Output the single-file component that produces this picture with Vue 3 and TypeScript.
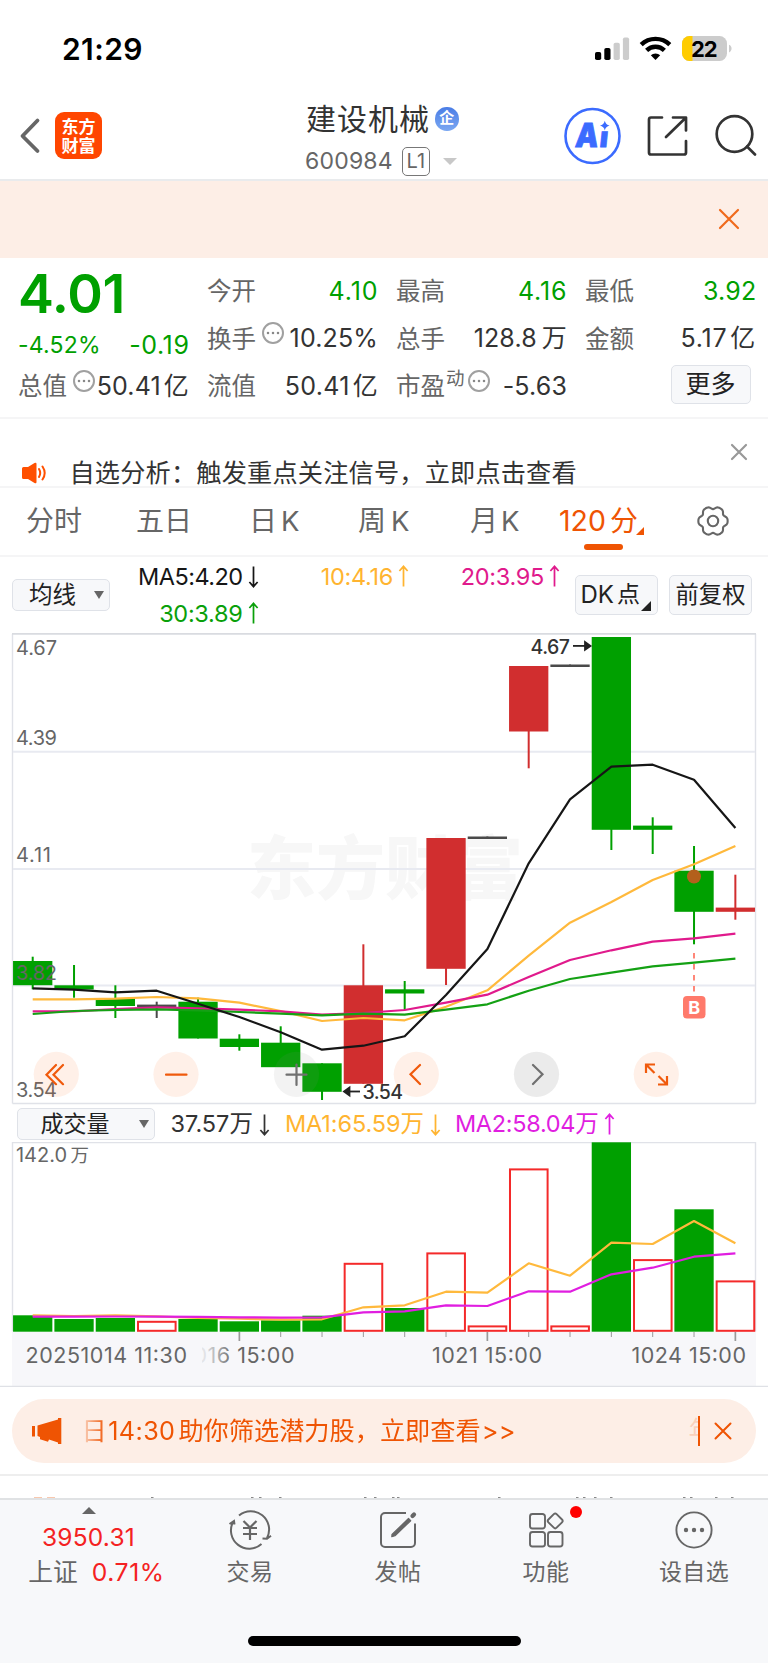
<script setup lang="ts">
type Tone = 'up' | 'down' | 'flat'
interface Candle { top: number; bottom: number; high: number; low: number; tone: Tone }

const STEP = 41.333
const FIRST = 32.7
const BODY = 39.3
const cx = (i: number): number => FIRST + i * STEP

const c = (high: number, top: number, bottom: number, low: number, tone: Tone): Candle => ({ high, top, bottom, low, tone })
const candles: Candle[] = [
  c(956.7, 961, 985.2, 989.3, 'down'),
  c(965, 985.3, 989.5, 997.7, 'down'),
  c(985.3, 998.3, 1006, 1018, 'down'),
  c(1001.7, 1004.6, 1007, 1018, 'flat'),
  c(997.7, 1001.7, 1038.5, 1038.5, 'down'),
  c(1034.3, 1038.7, 1047, 1050.7, 'down'),
  c(1026.3, 1042.7, 1067.2, 1067, 'down'),
  c(1063.3, 1063.3, 1091.8, 1100, 'down'),
  c(944.3, 985.3, 1083.8, 1083.8, 'up'),
  c(981, 989.3, 993.5, 1010, 'down'),
  c(838, 838, 968.8, 985, 'up'),
  c(836.5, 836.5, 839, 839, 'flat'),
  c(666, 666, 731.5, 768.3, 'up'),
  c(664.5, 664.5, 667, 667, 'flat'),
  c(637, 637, 829.8, 850, 'down'),
  c(817.3, 825.6, 829.8, 854, 'down'),
  c(846, 870.7, 911.8, 944.3, 'down'),
  c(874.7, 907.6, 911.8, 919.7, 'up'),
]

interface Line { color: string; ys: number[] }
const averages: Line[] = [
  { color: '#ffb93c', ys: [999.3, 999.3, 998.7, 997, 998.3, 1002.7, 1011, 1021, 1018, 1020.3, 1006.7, 990.3, 955.7, 922.7, 902, 880, 864.3, 846] },
  { color: '#e01a8c', ys: [1011.3, 1011.3, 1009, 1007.3, 1008.3, 1009.7, 1011.3, 1014.7, 1013, 1010, 1002.7, 994.7, 977, 960, 950.3, 941.7, 938.3, 933.7] },
  { color: '#14a114', ys: [1014, 1011, 1010, 1009.3, 1010.3, 1012, 1013.7, 1015.3, 1013.7, 1014.7, 1009.7, 1004.3, 990.7, 979, 972.7, 966.3, 962.7, 958.7] },
  { color: '#161616', ys: [988.3, 989.7, 992.3, 990.7, 1003.7, 1017, 1032.3, 1049.7, 1045.7, 1036.3, 995, 949, 863.3, 799.3, 766.7, 764.7, 779.7, 828] },
]
const volumeLines: Line[] = [
  { color: '#ffb93c', ys: [1315.4, 1316, 1315.3, 1316.3, 1318, 1318.7, 1319.7, 1319.3, 1307.3, 1305.3, 1291.7, 1292.7, 1263.3, 1275.7, 1242.7, 1244, 1221, 1243.3] },
  { color: '#e01ee0', ys: [1316.7, 1316.7, 1316.5, 1316.7, 1316.8, 1317.3, 1317.6, 1317.3, 1312.3, 1311.3, 1305.3, 1306, 1291.3, 1291.7, 1274.3, 1267.7, 1256.7, 1253.3] },
]
const points = (ys: number[]): string => ys.map((y, i) => `${cx(i).toFixed(1)},${y}`).join(' ')

const volumes: { top: number; up: boolean }[] = [
  { top: 1315.3, up: false }, { top: 1319, up: false }, { top: 1318, up: false }, { top: 1321, up: true },
  { top: 1319, up: false }, { top: 1321.3, up: false }, { top: 1320.3, up: false }, { top: 1315.7, up: false },
  { top: 1263, up: true }, { top: 1308, up: false }, { top: 1252.6, up: true }, { top: 1325.6, up: true },
  { top: 1168.6, up: true }, { top: 1325.6, up: true }, { top: 1142.3, up: false }, { top: 1259.3, up: true },
  { top: 1209.3, up: false }, { top: 1280.6, up: true },
]
const ticks = Array.from({ length: 13 }, (_, i) => i + 5)
const gridLines = [751.7, 869, 985.4]
const priceLabels = [
  { y: 655, text: '4.67' }, { y: 745, text: '4.39' }, { y: 862.2, text: '4.11' }, { y: 979.5, text: '3.82' }, { y: 1097, text: '3.54' },
]
const fill = (t: Tone): string => (t === 'up' ? '#d12e2f' : t === 'down' ? '#00a000' : '#4a4a4a')

// Six-lobed outline of the settings gear
const gear = Array.from({ length: 72 }, (_, i) => {
  const a = (i * Math.PI) / 36
  const r = 13.6 + 1.4 * Math.cos(6 * a) - 0.35 * Math.cos(12 * a)
  return `${(r * Math.cos(a)).toFixed(2)},${(r * Math.sin(a)).toFixed(2)}`
}).join(' ')

const tabs = [
  { cjk: '分时', latin: '', cls: 't1' }, { cjk: '五日', latin: '', cls: 't2' }, { cjk: '日', latin: 'K', cls: 't3' },
  { cjk: '周', latin: 'K', cls: 't4' }, { cjk: '月', latin: 'K', cls: 't5' },
]
const cutMarks = [34, 47, 151, 251, 259, 279, 364, 374, 392, 397, 498, 576, 583, 594, 610, 683, 690, 715, 731]
</script>

<template>
  <div class="phone">
    <div class="status">
      <span class="clock">21:29</span>
      <svg class="signals" width="140" height="30" viewBox="594 33 140 30">
        <rect x="595" y="52" width="6.2" height="8" rx="1.8" />
        <rect x="604.3" y="48" width="6.2" height="12" rx="1.8" />
        <rect x="613.6" y="42.7" width="6.2" height="17.3" rx="1.8" fill="#ccc" />
        <rect x="622.9" y="37.4" width="6.2" height="22.6" rx="1.8" fill="#ccc" />
        <g fill="none" stroke="#000" stroke-width="4.4">
          <path d="M641.2 44.6a20.6 20.6 0 0 1 28.6 0" />
          <path d="M646.6 50.3a12.8 12.8 0 0 1 17.8 0" />
        </g>
        <path d="M655.5 60l-4.7-4.7a6.8 6.8 0 0 1 9.4 0z" />
        <clipPath id="cell"><rect x="682" y="36" width="45" height="25" rx="7.5" /></clipPath>
        <g clip-path="url(#cell)"><rect x="682" y="36" width="45" height="25" fill="#ccc" /><rect x="682" y="36" width="10.5" height="25" fill="#fc0" /></g>
        <path d="M729 44.800c3.400 1.200 3.400 6.400 0 7.600z" fill="#ccc" />
        <text x="691" y="56.600" textLength="26.500" class="bat">22</text>
      </svg>
    </div>

    <header class="head">
      <svg class="back" width="22" height="38" viewBox="0 0 22 38"><path d="M18.500 3.500L3.500 19l15 15" fill="none" stroke="#666" stroke-width="3.800" stroke-linecap="round" stroke-linejoin="round" /></svg>
      <div class="logo">东方<br />财富</div>
      <div class="title">
        <div class="name">建设机械<i class="corp">企</i></div>
        <div class="code"><span>600984</span><b>L1</b><i class="caret"></i></div>
      </div>
      <svg class="actions" width="200" height="64" viewBox="560 104 200 64" fill="none">
        <circle cx="592.500" cy="136" r="27" stroke="#3b6bff" stroke-width="2.600" />
        <g class="ai" transform="translate(574.5 146.800) skewX(-6)">
          <text x="0" y="0" textLength="23" lengthAdjust="spacingAndGlyphs" class="cap">A</text>
          <text x="24.500" y="0" class="dotless">ı</text>
        </g>
        <path d="M604.800 120.800q.9 3.900 4.800 4.800-3.900.9-4.800 4.800-.9-3.900-4.800-4.800 3.900-.9 4.800-4.800z" fill="#3b6bff" />
        <g stroke="#333" stroke-width="2.700" stroke-linecap="round" stroke-linejoin="round">
          <path d="M662 117.500h-11a2 2 0 0 0-2 2v33a2 2 0 0 0 2 2h33a2 2 0 0 0 2-2v-11.500M673 117.500h13v13M685.500 118l-19.500 19" />
          <circle cx="734.500" cy="134" r="17.800" /><path d="M747 146.500l8 8" />
        </g>
      </svg>
    </header>

    <div class="banner"><svg width="22" height="22" viewBox="0 0 22 22"><path d="M2 2l18 18M20 2L2 20" stroke="#f06a1c" stroke-width="2.200" stroke-linecap="round" /></svg></div>

    <section class="quote">
      <div class="col first">
        <div class="price">4.01</div>
        <div class="delta"><span class="pct">-4.52%</span><span class="num chg">-0.19</span></div>
        <div class="cell"><label>总值</label><i class="dots"></i><span class="num">50.41<em>亿</em></span></div>
      </div>
      <div class="col">
        <div class="cell"><label>今开</label><span class="num g">4.10</span></div>
        <div class="cell"><label>换手</label><i class="dots"></i><span class="num">10.25%</span></div>
        <div class="cell"><label>流值</label><span class="num cap2">50.41<em>亿</em></span></div>
      </div>
      <div class="col">
        <div class="cell"><label>最高</label><span class="num g">4.16</span></div>
        <div class="cell"><label>总手</label><span class="num">128.8<em class="wan">万</em></span></div>
        <div class="cell"><label>市盈<sup>动</sup></label><i class="dots tight"></i><span class="num">-5.63</span></div>
      </div>
      <div class="col">
        <div class="cell"><label>最低</label><span class="num g low">3.92</span></div>
        <div class="cell"><label>金额</label><span class="num wide">5.17<em>亿</em></span></div>
        <div class="cell"><button class="btn more">更多</button></div>
      </div>
    </section>

    <section class="notice">
      <svg class="speaker" width="26" height="22" viewBox="0 0 26 22"><path d="M1 6.500q0-1.500 1.500-1.500H7l6.500-4q2-1 2 1v18q0 2-2 1L7 17H2.500Q1 17 1 15.500z" fill="#ff5000" /><path d="M18 7q2.400 4 0 8M21.500 4.500q4.400 6.500 0 13" fill="none" stroke="#ff5000" stroke-width="2" stroke-linecap="round" /></svg>
      <span>自选分析：触发重点关注信号，立即点击查看</span>
      <svg class="x" width="18" height="18" viewBox="0 0 18 18"><path d="M2 2l14 14M16 2L2 16" stroke="#999" stroke-width="2.200" stroke-linecap="round" /></svg>
    </section>

    <nav class="tabs">
      <span v-for="t in tabs" :key="t.cls" :class="t.cls">{{ t.cjk }}<b v-if="t.latin">{{ t.latin }}</b></span>
      <span class="on"><b>120</b>分<i class="corner"></i></span>
      <svg class="gear" width="34" height="34" viewBox="-17 -17 34 34" fill="none" stroke="#666" stroke-width="2.100" stroke-linejoin="round">
        <polygon :points="gear" /><circle r="5.200" />
      </svg>
    </nav>

    <section class="ma">
      <button class="btn sel">均线<i class="tri"></i></button>
      <div class="legend">
        <span class="k">MA5:4.20<svg class="arw dn" viewBox="0 0 12 24"><path d="M6 23V1M1.500 6L6 1l4.500 5" /></svg></span>
        <span class="y">10:4.16<svg class="arw" viewBox="0 0 12 24"><path d="M6 23V1M1.500 6L6 1l4.500 5" /></svg></span>
        <span class="m">20:3.95<svg class="arw" viewBox="0 0 12 24"><path d="M6 23V1M1.500 6L6 1l4.500 5" /></svg></span>
        <span class="gr">30:3.89<svg class="arw" viewBox="0 0 12 24"><path d="M6 23V1M1.500 6L6 1l4.500 5" /></svg></span>
      </div>
      <button class="btn dk">DK<em>点</em><i class="fold"></i></button>
      <button class="btn fq">前复权</button>
    </section>

    <svg class="chart" width="768" height="472" viewBox="0 633 768 472">
      <path d="M12.500 1103.500V634M755.500 634v469.500M12.500 1103.500h743" stroke="#e0e2e8" stroke-width="1.400" fill="none" />
      <path d="M12 633.900h744" stroke="#d9dbe0" stroke-width="1.800" />
      <text x="247" y="893.500" class="water" textLength="276">东方财富</text>
      <path v-for="y in gridLines" :key="y" :d="`M13 ${y}h742`" stroke="#e8eaf1" stroke-width="2" />
      <g v-for="(k, i) in candles" :key="i" :fill="fill(k.tone)">
        <rect :x="cx(i) - 1" :y="k.high" width="2" :height="k.low - k.high" />
        <rect :x="cx(i) - BODY / 2" :y="k.top" :width="BODY" :height="k.bottom - k.top" />
      </g>
      <text v-for="p in priceLabels" :key="p.text" :x="16" :y="p.y" :textLength="p.text === '4.11' ? 35 : 41" class="axis">{{ p.text }}</text>
      <polyline v-for="l in averages" :key="l.color" :points="points(l.ys)" :stroke="l.color" class="line" />
      <circle cx="694" cy="876.500" r="7" fill="#b3601c" />
      <path d="M694 953v44" stroke="#ff7a6b" stroke-width="1.800" stroke-dasharray="5.500 5.500" />
      <rect x="683" y="996" width="22.500" height="22.500" rx="4" fill="#ff7a6b" />
      <text x="694.200" y="1014" class="bmark">B</text>
      <g class="mark"><text x="530.500" y="653.500" textLength="39.500">4.67</text><path d="M573 645.900h13" /><path d="M585 642l5.500 3.900-5.500 3.900z" fill="#222" stroke="none" />
        <text x="362.500" y="1099.300" textLength="40.500">3.54</text><path d="M348 1091.500h12" /><path d="M349.500 1087.600l-5.500 3.900 5.500 3.900z" fill="#222" stroke="none" /></g>
      <g fill="none" stroke-width="2.200" stroke-linecap="round">
        <circle v-for="x in [56.300, 176, 416.300, 656.300]" :key="x" :cx="x" cy="1074.300" r="22.600" fill="#ff6a20" fill-opacity=".1" />
        <circle cx="296.500" cy="1074.300" r="22.600" fill="#888" fill-opacity=".1" />
        <circle cx="536.500" cy="1074.300" r="22.600" fill="#888" fill-opacity=".17" />
        <g stroke="#f05a0c"><path d="M56 1065l-9.500 9.700 9.500 9.500M63 1065l-9.500 9.700 9.500 9.500M166 1074.700h20.500M420 1065l-9.500 9.300 9.500 9.700" /><path d="M646 1073v-8.500h9M646.500 1065l8 8M667 1076v8.500h-9M666.500 1084l-8-8" stroke-linecap="butt" /></g>
        <path d="M286.500 1074.700h20M296.500 1064.500v20.500M533 1065l9.500 9.300-9.500 9.700" stroke="#707070" />
      </g>
    </svg>

    <div class="volhead">
      <button class="btn vol">成交量<i class="tri"></i></button>
      <span class="v1">37.57万<svg class="arw dn" viewBox="0 0 12 24"><path d="M6 23V1M1.500 6L6 1l4.500 5" /></svg></span>
      <span class="v2 y">MA1:65.59万<svg class="arw dn" viewBox="0 0 12 24"><path d="M6 23V1M1.500 6L6 1l4.500 5" /></svg></span>
      <span class="v3">MA2:58.04万<svg class="arw" viewBox="0 0 12 24"><path d="M6 23V1M1.500 6L6 1l4.500 5" /></svg></span>
    </div>

    <svg class="chart" width="768" height="245" viewBox="0 1142 768 245">
      <defs><linearGradient id="fade"><stop offset="0" stop-color="#f7f7fa" /><stop offset=".35" stop-color="#f7f7fa" stop-opacity=".85" /><stop offset="1" stop-color="#f7f7fa" stop-opacity="0" /></linearGradient></defs>
      <path d="M12.500 1331.500v-189h743v189" stroke="#e0e2e8" stroke-width="1.400" fill="none" />
      <rect x="12" y="1331.500" width="744" height="55" fill="#f7f7fa" />
      <text x="16" y="1162.300" class="axis" textLength="51">142.0</text><text x="70.500" y="1162.300" class="axis cjk">万</text>
      <template v-for="(v, i) in volumes" :key="i">
        <rect v-if="v.up" :x="cx(i) - 18.700" :y="v.top + .8" width="37.600" :height="1330 - v.top" fill="#fff" stroke="#f42a2a" stroke-width="2" />
        <rect v-else :x="cx(i) - BODY / 2" :y="v.top" :width="BODY" :height="1331.700 - v.top" fill="#00a000" />
      </template>
      <polyline v-for="l in volumeLines" :key="l.color" :points="points(l.ys)" :stroke="l.color" class="line" />
      <path v-for="i in ticks" :key="i" :d="`M${cx(i)} 1332v${i % 6 === 5 ? 9 : 5}`" stroke="#999" :stroke-width="i % 6 === 5 ? 1.700 : 1" />
      <g class="date">
        <text x="25.500" y="1362.700" textLength="161.500">20251014 11:30</text>
        <text x="193.500" y="1362.700" textLength="101">016 15:00</text>
        <rect x="190" y="1344" width="44" height="24" fill="url(#fade)" />
        <rect x="189" y="1344" width="13" height="24" fill="#f7f7fa" />
        <text x="432" y="1362.700" textLength="110">1021 15:00</text>
        <text x="631.500" y="1362.700" textLength="114.500">1024 15:00</text>
      </g>
      <path d="M0 1386.300h768" stroke="#dfe1e6" stroke-width="1.300" />
    </svg>

    <div class="promo-wrap">
      <div class="promo">
        <svg width="32" height="28" viewBox="0 0 32 28" fill="#ef5403"><rect x="1" y="9" width="3" height="10.500" /><path d="M6.500 8.500L27 2.500V1h3.300v26H27v-1.500L18 22.500l-1 2.200-8-2.500V20L6.500 19z" /></svg>
        <span class="msg">日<b>14:30</b>助你筛选潜力股，立即查看<b class="gt">&gt;&gt;</b></span>
        <span class="next">年</span>
        <svg class="px" width="18" height="18" viewBox="0 0 18 18"><path d="M1.500 1.500l15 15M16.500 1.500l-15 15" stroke="#ef5403" stroke-width="2" stroke-linecap="round" /></svg>
      </div>
    </div>

    <div class="peek"><svg width="768" height="3" viewBox="0 0 768 3"><rect v-for="(m, i) in cutMarks" :key="m" :x="m" y="1" :width="i < 2 ? 8 : 2.500" height="2" :fill="i < 2 ? '#f8c8ae' : '#888'" /></svg></div>

    <footer class="dock">
      <div class="index"><i class="upc"></i><span class="pts">3950.31</span><span class="sh">上证<b>0.71%</b></span></div>
      <div class="item">
        <svg width="46" height="42" viewBox="-23 -21 46 42" fill="none" stroke="#666" stroke-width="2"><path d="M-11-14.500A18.300 18.300 0 0 1 17 8M12.500 8.500l4.500 .3 4-3M11.500 14A18.300 18.300 0 0 1-17-8M-20.500-6l4.500-3 .5 3.500" /><path d="M-6.500-9L0-2.500 6.500-9M0-2.500V10M-7-2h14M-7 4h14" stroke-width="2.200" /></svg>
        <span>交易</span>
      </div>
      <div class="item">
        <svg width="46" height="42" viewBox="-23 -21 46 42" fill="none" stroke="#666" stroke-width="2" stroke-linejoin="round"><path d="M8-17h-21a4 4 0 0 0-4 4v26a4 4 0 0 0 4 4h26a4 4 0 0 0 4-4V-6.500" /><path d="M-6 4.500L10.500-11.500l2.200 2.200L-3 5.700l-3.200 1z" fill="#666" stroke-width="1.200" /><path d="M14.500-14l1.500-1.500" stroke-width="4.200" stroke-linecap="round" /></svg>
        <span>发帖</span>
      </div>
      <div class="item">
        <svg width="46" height="42" viewBox="-23 -21 46 42" fill="none" stroke="#666" stroke-width="1.900"><rect x="-16" y="-16" width="15" height="14.500" rx="2.500" /><rect x="-16" y="2" width="15" height="14.500" rx="2.500" /><rect x="2" y="2" width="14.500" height="14.500" rx="2.500" /><rect x="3.400" y="-14.900" width="11.600" height="11.600" rx="2" transform="rotate(45 9.200 -9.100)" /></svg>
        <i class="red"></i>
        <span>功能</span>
      </div>
      <div class="item">
        <svg width="46" height="42" viewBox="-23 -21 46 42" fill="none" stroke="#666" stroke-width="1.900"><circle r="17.600" /><g fill="#666" stroke="none"><circle cx="-8" cy="0" r="2.200" /><circle cx="0" cy="0" r="2.200" /><circle cx="8" cy="0" r="2.200" /></g></svg>
        <span>设自选</span>
      </div>
      <div class="home"></div>
    </footer>
  </div>
</template>

<style>
body { margin: 0; background: #fff; }
</style>

<style scoped>
.phone { width: 768px; height: 1663px; overflow: hidden; background: #fff; color: #333; font-family: Inter, "Noto Sans CJK SC", sans-serif; font-size: 25px; line-height: 1; display: flex; flex-direction: column; }
.phone * { box-sizing: border-box; }
.phone > * { flex: none; }
i, em { font-style: normal; }
b { font-weight: 400; }
svg { display: block; flex: none; }
.btn { font: inherit; color: #222; background: #f7f8fa; border: 1.5px solid #dfe2e8; border-radius: 5px; padding: 0; display: flex; align-items: center; white-space: nowrap; }

.status { height: 92px; display: flex; justify-content: space-between; padding: 33px 34px 0 62px; }
.clock { font-size: 30px; font-weight: 600; color: #000; line-height: 32px; letter-spacing: .4px; }
.bat { font: 700 22px Inter, sans-serif; }

.head { height: 89px; border-bottom: 2px solid #e9ebed; display: flex; }
.back { margin: 25px 0 0 19px; }
.logo { margin: 20px 0 0 14px; width: 47px; height: 47px; border-radius: 9px; background: #ff4600; color: #fff; font: 700 17px/19px "Noto Sans CJK SC", sans-serif; text-align: center; padding-top: 4px; }
.title { margin-left: 204px; width: 250px; }
.name { margin-top: 11px; font-size: 30px; line-height: 32px; letter-spacing: 1px; display: flex; align-items: center; }
.corp { width: 23.5px; height: 23.5px; margin-left: 5px; border-radius: 50%; background: linear-gradient(#4a7de6, #7ba8f2); color: #fff; font-size: 15px; line-height: 22px; font-weight: 700; text-align: center; letter-spacing: 0; }
.code { margin-top: 11px; display: flex; align-items: center; color: #666; font-size: 23px; height: 30px; }
.code span { letter-spacing: .2px; margin-left: -1px; }
.code b { width: 28px; height: 29px; margin-left: 9px; border: 1.5px solid #777; border-radius: 5px; font-size: 20px; line-height: 27px; text-align: center; }
.caret { margin-left: 13px; border: 7px solid transparent; border-top-color: #c8c8c8; border-bottom: 0; }
.actions { margin: 12px 0 0 4px; }
.ai { fill: #3b6bff; stroke: #3b6bff; stroke-width: .8; font-family: Inter, sans-serif; font-weight: 900; }
.cap { font-size: 33px; }
.dotless { font-size: 28px; }

.banner { height: 77px; background: #fdeee6; display: flex; justify-content: flex-end; padding: 27px 28.5px 0 0; }

.quote { height: 161px; padding: 10px 12px 0 18px; display: grid; grid-template-columns: repeat(4, 170.500px); column-gap: 18.500px; border-bottom: 2px solid #f5f5f6; }
.cell { height: 47.3px; display: flex; align-items: center; white-space: nowrap; }
.cell label { color: #666; font-size: 24.5px; }
.num { margin-left: auto; margin-right: -.5px; letter-spacing: .15px; }
.num em { margin-left: 3px; }
.num em.wan { margin-left: 5px; }
.num.wide { letter-spacing: .7px; }
.num.cap2 { letter-spacing: .3px; }
.num.g { color: #00a000; letter-spacing: .9px; margin-right: -1px; }
.num.low { letter-spacing: .2px; }
.num.chg { letter-spacing: .6px; margin-right: -1px; }
.price { height: 57px; font-size: 54px; font-weight: 600; color: #00a000; line-height: 51px; letter-spacing: -.3px; }
.delta { height: 37.6px; padding-top: 3px; display: flex; align-items: center; color: #00a000; }
.delta .pct { font-size: 23px; letter-spacing: .2px; }
.dots { width: 22px; height: 22px; border: 2px solid #a0a0a0; border-radius: 50%; margin: -11px 0 0 6px; background: radial-gradient(circle 1.6px at 4px 9px, #888 90%, transparent), radial-gradient(circle 1.6px at 9px 9px, #888 90%, transparent), radial-gradient(circle 1.6px at 14px 9px, #888 90%, transparent); }
.dots.tight { margin-left: 3px; }
sup { font-size: 18.500px; line-height: 0; vertical-align: 10px; margin-left: 1px; }
.btn.more { width: 80px; height: 39px; margin: -3px 5px 0 auto; justify-content: center; font-size: 25px; }

.notice { height: 69px; border-bottom: 2px solid #f5f5f6; display: flex; overflow: hidden; padding-left: 21px; }
.speaker { margin-top: 43px; }
.notice span { margin: 39px 0 0 24px; line-height: 30px; font-size: 25.2px; letter-spacing: .18px; width: 600px; white-space: nowrap; text-indent: -1.500px; }
.notice .x { margin: 24px 0 0 59px; }

.tabs { height: 69px; border-bottom: 2px solid #f5f5f6; display: flex; color: #666; font-size: 28px; line-height: 67px; white-space: nowrap; }
.tabs > span { flex: none; }
.tabs b { margin-left: 4px; font-size: 27.500px; }
.t1 { width: 110px; padding-left: 26px; }
.t2 { width: 139px; padding-left: 26px; }
.t3 { width: 109px; }
.t4 { width: 112px; }
.tabs .t4 b { margin-left: 5px; }
.t5 { width: 88px; }
.tabs .t5 b { margin-left: 3px; }
.tabs .on { width: 138px; color: #ef5403; position: relative; line-height: 66px; }
.tabs .on b { margin: 0 4px 0 1px; font-size: 28.500px; }
.on::after { content: ""; position: absolute; left: 25.500px; top: 56px; width: 39.500px; height: 6px; border-radius: 3px; background: #ef5403; }
.corner { display: inline-block; margin-left: -1.500px; border: 4px solid #ef5403; border-left-color: transparent; border-top-color: transparent; vertical-align: -4px; }
.gear { margin-top: 16px; }

.ma { height: 76px; display: flex; padding-left: 12px; }
.sel { width: 98px; height: 32px; margin-top: 22px; font-size: 23.500px; padding-left: 16px !important; }
.tri { margin-left: auto; margin-right: 5px; border: 5px solid transparent; border-top: 8px solid #666; border-bottom: 0; }
.legend { width: 452px; height: 76px; padding-top: 1px; display: grid; grid-template-columns: 148.500px 150.500px 151px; grid-template-rows: 37px 37px; font-size: 23.500px; letter-spacing: -.3px; }
.legend span { display: flex; align-items: center; justify-content: flex-end; white-space: nowrap; }
.legend .k { letter-spacing: -.55px; }
.arw { width: 11px; height: 23px; margin-left: 6px; fill: none; stroke: currentColor; stroke-width: 1.900; }
.legend .arw { margin-left: 5px; }
.dn { transform: rotate(180deg); }
.k { color: #161616; } .y { color: #ffb430; } .m { color: #e01a8c; } .gr { color: #0aa00a; }
.dk { width: 83px; height: 39.500px; margin: 18px 0 0 13px; font-size: 24px; padding-left: 4.500px !important; }
.dk em { margin-left: 3px; font-size: 23px; }
.fold { align-self: flex-end; margin: 0 0 2.500px 1.500px; border: 5.500px solid #222; border-left-color: transparent; border-top-color: transparent; }
.fq { width: 83px; height: 39.500px; margin: 18px 0 0 11px; font-size: 23.300px; justify-content: center; }

.axis { font: 20px Inter, sans-serif; fill: #666; }
.axis.cjk { font: 18.500px "Noto Sans CJK SC", sans-serif; }
.water { font: 900 69px "Noto Sans CJK SC", sans-serif; fill: #f7f7f7; }
.line { fill: none; stroke-width: 2.200; stroke-linejoin: round; }
.mark { font: 500 19.500px Inter, sans-serif; fill: #333; stroke-width: 1.800; }
.mark path { stroke: #222; }
.bmark { font: 700 18px Inter, sans-serif; fill: #fff; text-anchor: middle; }
.date { font: 21.500px Inter, sans-serif; fill: #666; }

.volhead { height: 37px; display: flex; align-items: center; padding: 1px 0 0 16.500px; font-size: 23.500px; white-space: nowrap; }
.vol { width: 138px; height: 31.500px; font-size: 23px; padding-left: 23px !important; }
.volhead > span { display: flex; align-items: center; }
.v1 { margin-left: 16px; } .v2 { margin-left: 15px; letter-spacing: -.1px; } .v3 { margin-left: 14px; color: #e01ee0; letter-spacing: -.3px; }

.promo-wrap { height: 89px; padding: 12px 12px 0; border-bottom: 2px solid #eee; }
.promo { height: 64px; border-radius: 32px; background: #fdeee6; color: #ef5403; display: flex; align-items: center; padding-left: 18.500px; font-size: 25.200px; white-space: nowrap; }
.msg { width: 607px; margin-left: 19px; -webkit-mask-image: linear-gradient(90deg, rgba(0, 0, 0, .15), #000 24px); mask-image: linear-gradient(90deg, rgba(0, 0, 0, .15), #000 24px); line-height: 34px; }
.msg b { margin: 0 3px 0 1.500px; letter-spacing: .4px; }
.msg .gt { margin-left: 1px; }
.next { width: 11px; height: 30px; line-height: 28px; overflow: hidden; border-right: 2px solid #ef5403; -webkit-text-fill-color: rgba(239, 84, 3, .2); }
.px { margin-left: 14.500px; }

.peek { height: 22px; padding-top: 20px; }
.dock { height: 165px; border-top: 2px solid #e0e2e4; background: #f7f8fa; display: grid; grid-template-columns: 176px repeat(4, 148px); position: relative; color: #666; font-size: 23px; }
.index { display: flex; flex-direction: column; align-items: center; }
.upc { border: 7px solid transparent; border-bottom-color: #666; border-top: 0; margin: 7px 0 0 1px; }
.pts { color: #f42222; font-size: 24.500px; line-height: 30px; margin-top: 8px; letter-spacing: .2px; margin-left: 1px; }
.sh { display: flex; align-items: center; height: 36px; font-size: 24.700px; margin-top: 2px; margin-left: 17px; white-space: nowrap; }
.sh b { margin-left: 14px; color: #f42222; letter-spacing: .6px; }
.item { display: flex; flex-direction: column; align-items: center; position: relative; letter-spacing: .4px; }
.item svg { margin-top: 8.500px; }
.item span { margin-top: 8px; line-height: 27px; }
.red { position: absolute; left: 98px; top: 6px; width: 12px; height: 12px; border-radius: 50%; background: #f00; }
.home { position: absolute; left: 248px; top: 136px; width: 273px; height: 10px; border-radius: 5px; background: #000; }
</style>
